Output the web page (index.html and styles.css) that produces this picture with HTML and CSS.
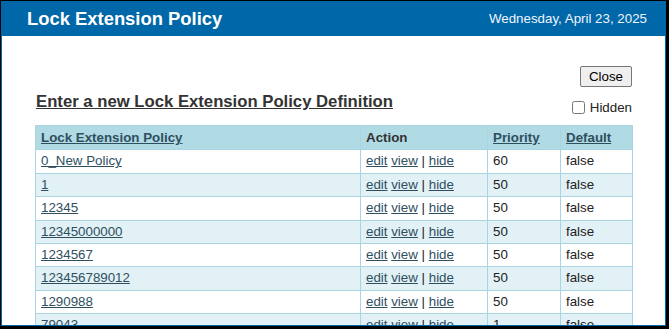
FILE: index.html
```html
<!DOCTYPE html>
<html lang="en">
<head>
  <meta charset="UTF-8">
  <title>Lock Extension Policy</title>
  <link rel="stylesheet" href="styles.css">
</head>
<body>
  <div class="dialog">
    <!-- Title bar -->
    <div class="titlebar">
      <h1>Lock Extension Policy</h1>
      <span class="date">Wednesday, April 23, 2025</span>
    </div>

    <div class="content">
      <div class="toolbar">
        <button class="btn-close">Close</button>
      </div>

      <div class="heading-row">
        <h2><a href="#">Enter a new Lock Extension Policy Definition</a></h2>
        <label class="hidden-toggle"><input type="checkbox"> Hidden</label>
      </div>

      <table class="policy-table">
        <thead>
          <tr>
            <th class="col-name"><a href="#">Lock Extension Policy</a></th>
            <th class="col-action">Action</th>
            <th class="col-priority"><a href="#">Priority</a></th>
            <th class="col-default"><a href="#">Default</a></th>
          </tr>
        </thead>
        <tbody>
          <tr>
            <td><a href="#">0_New Policy</a></td>
            <td><a href="#">edit</a> <a href="#">view</a> | <a href="#">hide</a></td>
            <td>60</td>
            <td>false</td>
          </tr>
          <tr>
            <td><a href="#">1</a></td>
            <td><a href="#">edit</a> <a href="#">view</a> | <a href="#">hide</a></td>
            <td>50</td>
            <td>false</td>
          </tr>
          <tr>
            <td><a href="#">12345</a></td>
            <td><a href="#">edit</a> <a href="#">view</a> | <a href="#">hide</a></td>
            <td>50</td>
            <td>false</td>
          </tr>
          <tr>
            <td><a href="#">12345000000</a></td>
            <td><a href="#">edit</a> <a href="#">view</a> | <a href="#">hide</a></td>
            <td>50</td>
            <td>false</td>
          </tr>
          <tr>
            <td><a href="#">1234567</a></td>
            <td><a href="#">edit</a> <a href="#">view</a> | <a href="#">hide</a></td>
            <td>50</td>
            <td>false</td>
          </tr>
          <tr>
            <td><a href="#">123456789012</a></td>
            <td><a href="#">edit</a> <a href="#">view</a> | <a href="#">hide</a></td>
            <td>50</td>
            <td>false</td>
          </tr>
          <tr>
            <td><a href="#">1290988</a></td>
            <td><a href="#">edit</a> <a href="#">view</a> | <a href="#">hide</a></td>
            <td>50</td>
            <td>false</td>
          </tr>
          <tr>
            <td><a href="#">79043</a></td>
            <td><a href="#">edit</a> <a href="#">view</a> | <a href="#">hide</a></td>
            <td>1</td>
            <td>false</td>
          </tr>
        </tbody>
      </table>
    </div>
  </div>
</body>
</html>
```

FILE: styles.css
```css
/* General */
html, body {
  margin: 0;
  height: 100%;
  overflow: hidden;
}
body {
  background-color: #000;
  font-family: "Liberation Sans", Arial, sans-serif;
  color: #222;
}
a {
  color: #2f4f5f;
}

/* Dialog window */
.dialog {
  margin: 1px 3px 0 1px;
  height: 325px;
  box-sizing: border-box;
  border: 1px solid #0067a8;
  border-top: 0;
  background-color: #fff;
  overflow: hidden;
}

/* Title bar */
.titlebar {
  display: flex;
  justify-content: space-between;
  align-items: center;
  height: 35px;
  padding: 0 18px 0 25px;
  background-color: #0067a8;
  color: #fff;
}
.titlebar h1 {
  margin: 0;
  font-size: 18.4px;
  font-weight: bold;
}
.titlebar .date {
  font-size: 13.33px;
  color: #eef6ff;
}

/* Content */
.content {
  padding: 30px 32px 0 34px;
}
.toolbar {
  display: flex;
  justify-content: flex-end;
}
.btn-close {
  font-family: "Liberation Sans", Arial, sans-serif;
  font-size: 13.33px;
  height: 21px;
  padding: 0 8px;
  margin-right: 1px;
  color: #000;
  background-color: #efefef;
  border: 1px solid #767676;
  border-radius: 2px;
}

.heading-row {
  display: flex;
  justify-content: space-between;
  align-items: flex-end;
  margin-top: 5px;
}
.heading-row h2 {
  margin: 0;
  font-size: 16.7px;
  line-height: 20px;
}
.heading-row h2 a {
  color: #333;
}
.hidden-toggle {
  display: flex;
  align-items: center;
  gap: 5px;
  font-size: 13.33px;
  color: #222;
  margin-right: 1px;
  margin-bottom: -3px;
}
.hidden-toggle input {
  margin: 0 0 0 -1px;
  width: 13px;
  height: 13px;
}

/* Table */
.policy-table {
  width: 598px;
  margin: 13px 0 0 -1px;
  border-collapse: collapse;
  font-size: 13.33px;
}
.policy-table th,
.policy-table td {
  padding: 4px 5px;
  line-height: 14.4px;
  text-align: left;
  border: 1px solid #a9d5e2;
}
.policy-table th {
  background-color: #b0dae4;
  color: #333;
  padding-top: 5px;
  padding-bottom: 4px;
}
.policy-table tbody tr:nth-child(even) {
  background-color: #e1f1f6;
}
.col-name { width: 314px; }
.col-action { width: 116px; }
.col-priority { width: 62px; }
```
